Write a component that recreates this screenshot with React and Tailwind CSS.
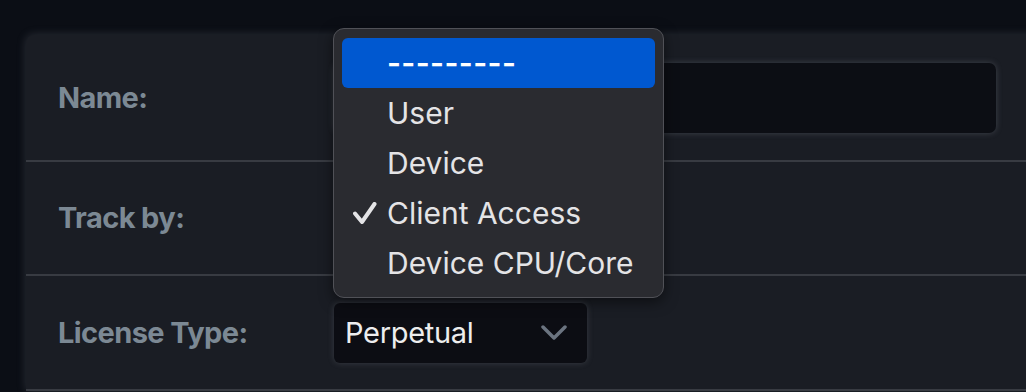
const items = ["User", "Device", "Client Access", "Device CPU/Core"];

const Row = ({ label, children, className }) => (
    <div className={`flex items-center border-b-2 border-[#383b42] ${className}`}>
        <div className="w-[308px] pl-[32px] text-[29px] font-bold tracking-[-0.6px] text-[#7c8994]">
            {label}
        </div>
        <div className="flex items-center">{children}</div>
    </div>
);

const Menu = () => (
    <div className="absolute left-[333px] top-[28px] w-[331px] h-[270px] rounded-[11px] border border-[#505157] bg-[#2a2b30] px-[8px] pt-[9px] shadow-[0_4px_14px_rgba(0,0,0,0.5)]">
        <div className="h-[50px] rounded-[6px] bg-[#0058d0] pl-[45px] flex items-center text-white text-[30px] tracking-[0.4px] font-semibold">
            ---------
        </div>
        {items.map((item) => (
            <div key={item} className="relative h-[50px] pl-[45px] flex items-center text-[30px] text-[#e4e4e6]">
                {item === "Client Access" && (
                    <svg className="absolute left-[11px] top-[14px]" width="24" height="24" viewBox="0 0 24 24">
                        <path d="M2 11.5 L9 20 L21.5 2" fill="none" stroke="#e4e4e6" strokeWidth="4" strokeLinecap="round" strokeLinejoin="round" />
                    </svg>
                )}
                {item}
            </div>
        ))}
    </div>
);

const App = () => {
    return (
        <div className="relative w-[1026px] h-[392px] overflow-hidden bg-[#0b0e15] pl-[26px] pt-[35px] font-['Inter',sans-serif]">
            <div className="w-[1040px] rounded-tl-[8px] bg-[#1a1d24] shadow-[0_0_10px_rgba(120,125,135,0.3)]">
                <Row label="Name:" className="h-[127px]">
                    <div className="w-[662px] h-[70px] rounded-[7px] bg-[#0c0e14] shadow-[0_0_6px_rgba(150,155,165,0.3)]" />
                </Row>
                <Row label="Track by:" className="h-[114px]">
                    <div className="w-[253px] h-[60px] rounded-[5px] bg-[#0c0d13]" />
                </Row>
                <Row label="License Type:" className="h-[115px]">
                    <div className="w-[253px] h-[60px] rounded-[6px] bg-[#0c0d13] shadow-[0_0_6px_rgba(150,155,165,0.25)] flex items-center justify-between pl-[11px] pr-[20px]">
                        <span className="text-[29px] tracking-[-0.3px] text-[#ededee]">Perpetual</span>
                        <svg width="26" height="16" viewBox="0 0 26 16">
                            <path d="M2 2 L13 13 L24 2" fill="none" stroke="#6b7480" strokeWidth="3.5" strokeLinecap="round" strokeLinejoin="round" />
                        </svg>
                    </div>
                </Row>
            </div>
            <Menu />
        </div>
    );
};

export default App;
